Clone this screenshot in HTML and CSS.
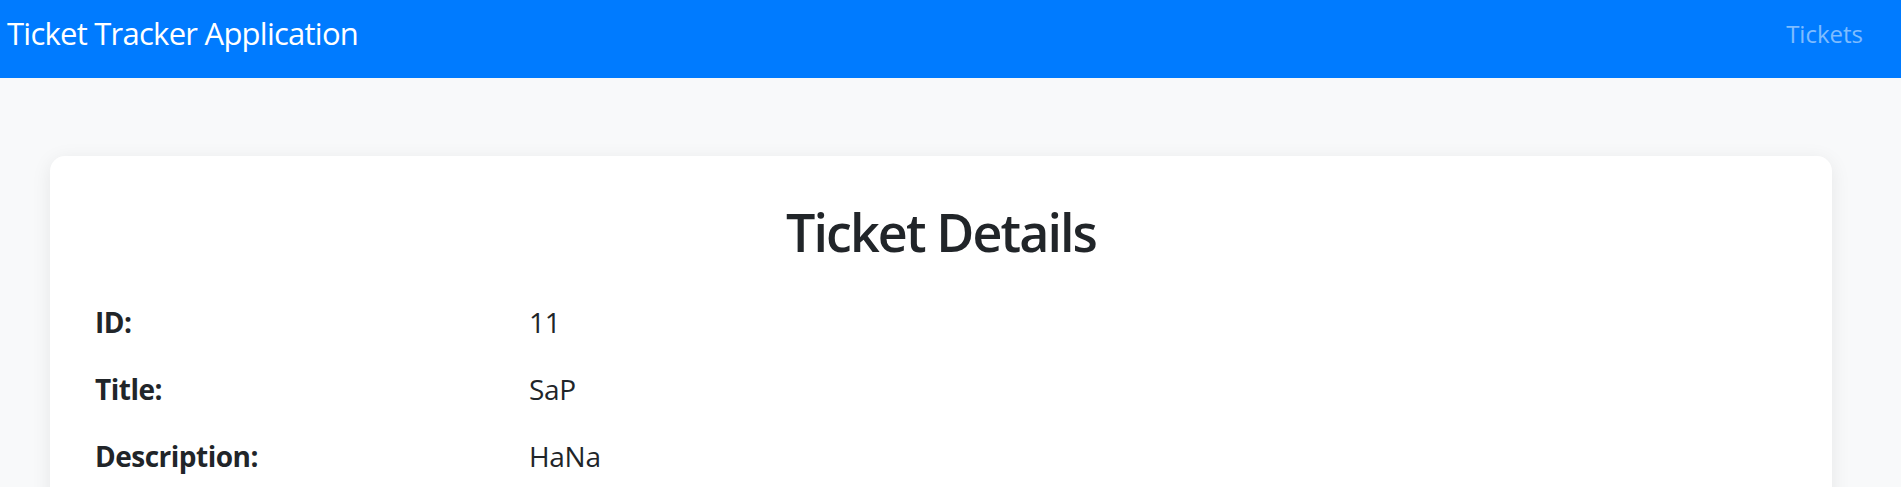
FILE: index.html
```html
<!DOCTYPE html>
<html lang="en">
<head>
<meta charset="utf-8">
<title>Ticket Tracker Application</title>
<link rel="stylesheet" href="styles.css">
</head>
<body>
<nav class="navbar">
  <a class="brand" href="#">Ticket Tracker Application</a>
  <a class="nav-link" href="#">Tickets</a>
</nav>
<main class="page">
  <section class="card">
    <h1 class="title">Ticket Details</h1>
    <dl class="details">
      <div class="row"><dt>ID:</dt><dd>11</dd></div>
      <div class="row"><dt>Title:</dt><dd>SaP</dd></div>
      <div class="row"><dt>Description:</dt><dd>HaNa</dd></div>
    </dl>
  </section>
</main>
</body>
</html>
```
FILE: styles.css
```css
* { box-sizing: border-box; }
html, body { margin: 0; padding: 0; }
body {
  background: #f8f9fa;
  font-family: "Open Sans", "Noto Sans", "Liberation Sans", sans-serif;
  color: #212529;
  overflow: hidden;
}
a { text-decoration: none; }
.navbar {
  height: 78px;
  background: #007bff;
  display: flex;
  justify-content: space-between;
  align-items: flex-start;
  padding: 0 38px 0 7px;
}
.brand {
  color: #ffffff;
  font-size: 31px;
  line-height: 40px;
  margin-top: 13px;
  letter-spacing: -0.75px;
}
.nav-link {
  color: rgba(255, 255, 255, 0.5);
  font-size: 24px;
  line-height: 36px;
  margin-top: 16px;
}
.page {
  padding: 78px 69px 0 50px;
}
.card {
  background: #ffffff;
  border-radius: 15px;
  box-shadow: 0 4px 20px rgba(0, 0, 0, 0.08);
  padding: 44px 45px 40px 45px;
  min-height: 400px;
}
.title {
  margin: 0;
  text-align: center;
  font-size: 52px;
  line-height: 64px;
  font-weight: 600;
  letter-spacing: -1.9px;
}
.details {
  margin: 38px 0 0 0;
  display: flex;
  flex-direction: column;
  gap: 27px;
}
.row {
  display: grid;
  grid-template-columns: 434px 1fr;
  font-size: 28px;
  line-height: 40px;
}
.row dt { font-weight: 700; letter-spacing: -0.5px; }
.row dd { margin: 0; letter-spacing: -0.3px; }
```
